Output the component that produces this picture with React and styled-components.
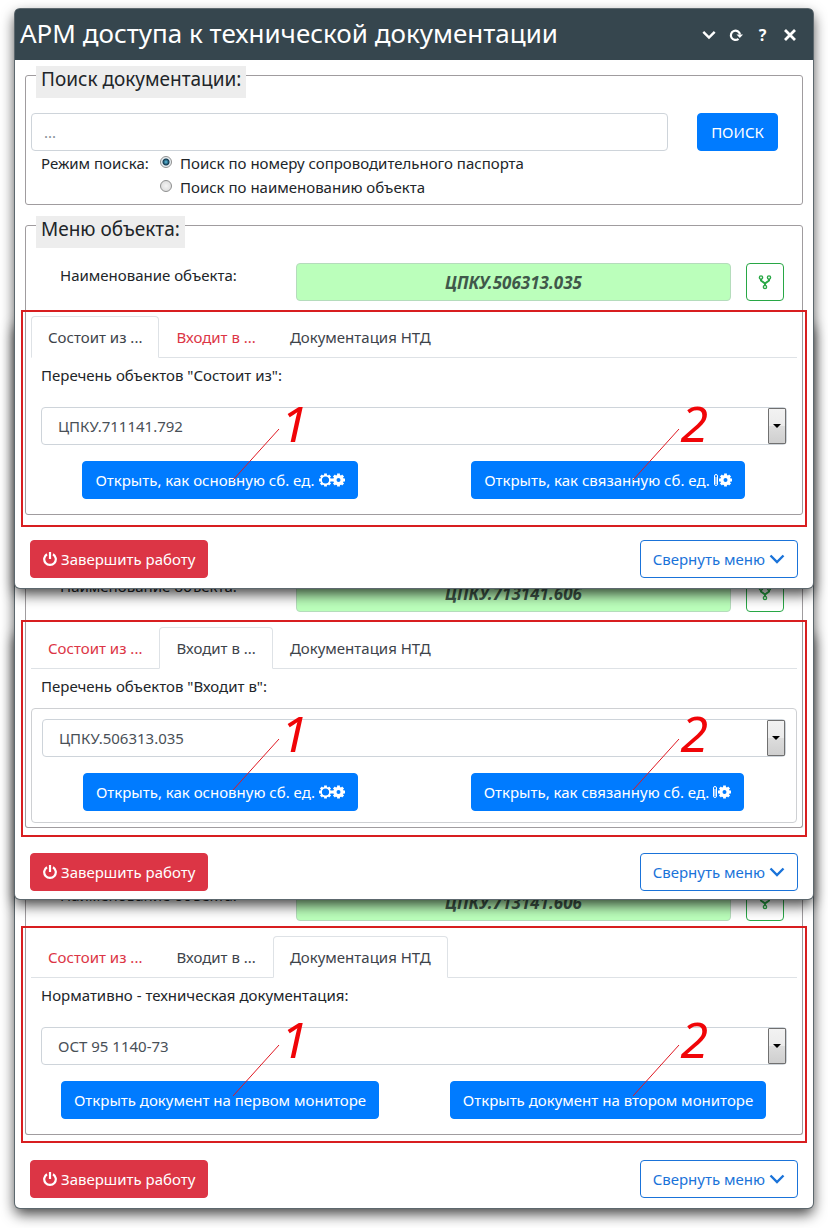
import React, { useState } from "react";
import styled, { createGlobalStyle } from "styled-components";

const GlobalStyle = createGlobalStyle`
  *, *::before, *::after { box-sizing: border-box; }
  body {
    margin: 0;
    background: #fff;
    color: #212529;
    font-family: "Noto Sans", "Open Sans", sans-serif;
    font-size: 15px;
    line-height: 24px;
  }
  button, input, select { font: inherit; color: inherit; margin: 0; }
`;

const Page = styled.main`
  padding: 9px 15px 20px;
`;

const Window = styled.section`
  position: relative;
  z-index: ${(p) => p.$level};
  margin-top: ${(p) => (p.$overlap ? -p.$overlap : 0)}px;
  padding-top: ${(p) => p.$inset || 0}px;
  background: #fff;
  border-radius: 5px;
  box-shadow: 0 0 0 1px #5d686e, 0 6px 14px rgba(0, 0, 0, 0.75);
`;

const TitleBar = styled.header`
  display: flex;
  align-items: center;
  justify-content: space-between;
  height: 51px;
  padding: 0 16px 0 5px;
  color: #fff;
  background: #36464e;
  border-radius: 4px 4px 0 0;
`;

const Title = styled.h1`
  margin: 0;
  padding-bottom: 4px;
  font-size: 26px;
  font-weight: 400;
  line-height: 36px;
`;

const TitleTools = styled.div`
  display: flex;
  gap: 12px;
`;

const ToolButton = styled.button`
  display: grid;
  place-items: center;
  width: 15px;
  height: 20px;
  padding: 0;
  color: #fff;
  font-size: 16px;
  font-weight: 700;
  line-height: 20px;
  background: none;
  border: 0;
`;

const Body = styled.div`
  padding: ${(p) => (p.$cut ? 0 : 6)}px 10px 0;
`;

const Group = styled.fieldset`
  min-width: 0;
  margin: 0 0 11px;
  padding: 0 5px ${(p) => p.$bottom || 0}px;
  border: 1px solid #a09c9f;
  border-radius: 3px;
  ${(p) => p.$cut && "border-top: 0; border-radius: 0 0 3px 3px;"}
`;

const Legend = styled.legend`
  height: 18px;
  margin-left: 5px;
  padding: 0;
  font-size: 19px;

  span {
    display: block;
    height: 32px;
    padding: 0 5px;
    line-height: 26px;
    background: #ededed;
  }
`;

const SearchRow = styled.div`
  display: flex;
  gap: 29px;
  margin-top: 29px;
  padding-right: 19px;
`;

const SearchInput = styled.input`
  flex: 1;
  min-width: 0;
  height: 38px;
  padding: 6px 12px;
  border: 1px solid #ced4da;
  border-radius: 4px;
  &::placeholder { color: #868e96; }
`;

const Button = styled.button`
  display: inline-flex;
  align-items: center;
  justify-content: center;
  gap: 4px;
  height: 38px;
  padding: 0 12px;
  white-space: nowrap;
  color: ${(p) => (p.$outline ? p.$tone : "#fff")};
  background: ${(p) => (p.$outline ? "#fff" : p.$tone)};
  border: 1px solid ${(p) => p.$tone};
  border-radius: 4px;
`;

const SearchButton = styled(Button)`
  min-width: 81px;
`;

const ModeRow = styled.div`
  display: flex;
  padding: 0 10px;
`;

const ModeName = styled.span`
  width: 119px;
`;

const ModeLabel = styled.label`
  display: flex;
  gap: 8px;
`;

const Radio = styled.input`
  appearance: none;
  width: 12px;
  height: 12px;
  margin-top: 5px;
  background: radial-gradient(#f4f4f4, #d6d6d6);
  border: 1px solid #8e8f8f;
  border-radius: 50%;
  &:checked {
    background: radial-gradient(#5fc3e6 0, #11394f 3px, #e8eef2 4px);
  }
`;

const NameRow = styled.div`
  display: flex;
  gap: 15px;
  margin-top: ${(p) => (p.$cut ? 0 : 29)}px;
  padding-right: 13px;
`;

const NameLabel = styled.label`
  width: 250px;
  padding-left: 29px;
`;

const NameInput = styled.input`
  flex: 1;
  min-width: 0;
  height: 38px;
  text-align: center;
  color: #40584a;
  font-size: 17px;
  font-weight: 700;
  font-style: italic;
  background: #bbffbb;
  border: 1px solid #b5dcbc;
  border-radius: 4px;
`;

const TreeButton = styled(Button)`
  width: 38px;
  padding: 0;
`;

const Marked = styled.div`
  position: relative;
  margin-top: 15px;
`;

const Tabs = styled.div`
  display: flex;
  border-bottom: 1px solid #dee2e6;
`;

const Tab = styled.button`
  height: 42px;
  margin-bottom: -1px;
  padding: 0 16px;
  color: ${(p) => (p.$empty ? "#dc3545" : "#3d434a")};
  background: ${(p) => (p.$active ? "#fff" : "none")};
  border: 1px solid ${(p) => (p.$active ? "#dee2e6" : "transparent")};
  border-bottom-color: ${(p) => (p.$active ? "#fff" : "transparent")};
  border-radius: 4px 4px 0 0;
`;

const ListLabel = styled.label`
  display: block;
  padding: 5px 10px 0;
`;

const Card = styled.div`
  margin-top: ${(p) => (p.$framed ? 10 : 20)}px;
  padding: ${(p) => (p.$framed ? "10px 10px 11px" : "0 10px")};
  border: ${(p) => (p.$framed ? "1px solid #ced0d3" : "0")};
  border-radius: 4px;
`;

const SelectBox = styled.div`
  display: flex;
  height: 38px;
  padding-left: 16px;
  border: 1px solid #ced4da;
  border-radius: 4px;
`;

const Select = styled.select`
  flex: 1;
  color: #495057;
  background: none;
  border: 0;
  appearance: none;
`;

const SelectArrow = styled.span`
  display: grid;
  place-items: center;
  width: 18px;
  background: linear-gradient(#f2f2f2, #ebebeb 50%, #dddddd 50%, #cfcfcf);
  border: 1px solid #707070;
  border-radius: 1px;
  pointer-events: none;
`;

const OpenRow = styled.div`
  display: grid;
  grid-template-columns: 1fr 1fr;
  justify-items: center;
  margin: 16px -15px 0;
`;

const Footer = styled.footer`
  display: flex;
  justify-content: space-between;
  padding: 14px 15px ${(p) => p.$bottom}px;
`;

const Frame = styled.div`
  position: absolute;
  top: ${(p) => -p.$rise}px;
  left: -10px;
  right: -10px;
  height: 217px;
  border: 2px solid #d81e20;
  pointer-events: none;
`;

const Callout = styled.div`
  position: absolute;
  top: 81px;
  left: ${(p) => p.$left};
  width: 80px;
  height: 90px;
  color: #f00508;
`;

const CalloutLine = styled.svg`
  position: absolute;
  top: 35px;
  left: 0;
`;

const CalloutNumber = styled.span`
  position: absolute;
  top: 0;
  left: 49px;
  font-size: 50px;
  font-style: italic;
  line-height: 60px;
`;

const ChevronIcon = ({ size = 16, width = 2.4 }) => (
  <svg width={size} height={size} viewBox="0 0 16 16" fill="none" stroke="currentColor" strokeWidth={width}>
    <path d="M1.500 4.500 8 11 14.500 4.500" />
  </svg>
);

const RefreshIcon = () => (
  <svg width="14" height="14" viewBox="0 0 14 14" fill="none" stroke="currentColor" strokeWidth="2.2">
    <path d="M9.5 10.8A4.6 4.6 0 1 1 11 6.500" />
    <path d="M7.500 6.500H14L10.800 10z" fill="currentColor" stroke="none" />
  </svg>
);

const CloseIcon = () => (
  <svg width="14" height="14" viewBox="0 0 14 14" stroke="currentColor" strokeWidth="2.8">
    <path d="M2 2 12 12M12 2 2 12" />
  </svg>
);

const PowerIcon = () => (
  <svg width="14" height="16" viewBox="0 0 14 16" fill="none" stroke="currentColor" strokeWidth="2.2">
    <path d="M4 3.200A5.800 5.800 0 1 0 10 3.200" />
    <path d="M7 1V8" />
  </svg>
);

const ForkIcon = () => (
  <svg width="14" height="16" viewBox="0 0 14 16" fill="none" stroke="currentColor" strokeWidth="1.4">
    <circle cx="3" cy="3.500" r="1.600" />
    <circle cx="11" cy="3.500" r="1.600" />
    <circle cx="7" cy="13" r="1.600" />
    <path d="M3 5V6.500L7 9.500 11 6.500V5M7 9.500V11.500" strokeWidth="2" />
  </svg>
);

const TEETH = [0, 45, 90, 135];

const Gear = ({ x, hole }) => (
  <g transform={`translate(${x} 7)`}>
    {TEETH.map((a) => (
      <path key={a} d="M0-6.500V-4M0 4V6.500" strokeWidth="2.800" transform={`rotate(${a})`} />
    ))}
    <circle r={(hole + 5.2) / 2} fill="none" strokeWidth={5.2 - hole} />
  </g>
);

const GearsIcon = () => (
  <svg width="26" height="14" viewBox="0 0 26 14" stroke="currentColor">
    <Gear x={6.5} hole={3.6} />
    <Gear x={19.5} hole={2} />
  </svg>
);

const LinkedGearIcon = () => (
  <svg width="18" height="14" viewBox="0 0 18 14" stroke="currentColor">
    <rect x="0.500" y="1.500" width="3" height="11" rx="1.500" fill="none" />
    <path d="M2 4V11" />
    <Gear x={11.5} hole={2} />
  </svg>
);

const ArrowIcon = () => (
  <svg width="8" height="4" viewBox="0 0 8 4" fill="#000">
    <path d="M0 0H8L4 4z" />
  </svg>
);

const TAB_NAMES = ["Состоит из ...", "Входит в ...", "Документация НТД"];

function CalloutMark({ left, children }) {
  return (
    <Callout $left={left}>
      <CalloutLine width="50" height="54" viewBox="0 0 50 54">
        <path d="M1 52 47 1" stroke="#e01822" strokeWidth="1" />
      </CalloutLine>
      <CalloutNumber>{children}</CalloutNumber>
    </Callout>
  );
}

function ObjectMenu({ id, name, active, empty, caption, value, framed, rise, actions, cut }) {
  const [current, setCurrent] = useState(active);
  return (
    <>
      <NameRow $cut={cut}>
        <NameLabel htmlFor={`${id}-name`}>Наименование объекта:</NameLabel>
        <NameInput id={`${id}-name`} value={name} readOnly />
        <TreeButton type="button" $outline $tone="#28a745" aria-label="Дерево">
          <ForkIcon />
        </TreeButton>
      </NameRow>
      <Marked>
        <Tabs role="tablist">
          {TAB_NAMES.map((tab, i) => (
            <Tab
              key={tab}
              type="button"
              role="tab"
              aria-selected={i === current}
              $active={i === current}
              $empty={i === empty}
              onClick={() => setCurrent(i)}
            >
              {tab}
            </Tab>
          ))}
        </Tabs>
        <ListLabel htmlFor={`${id}-list`}>{caption}</ListLabel>
        <Card $framed={framed}>
          <SelectBox>
            <Select id={`${id}-list`} defaultValue={value}>
              <option>{value}</option>
            </Select>
            <SelectArrow><ArrowIcon /></SelectArrow>
          </SelectBox>
          <OpenRow>
            {actions.map(({ text, Icon }) => (
              <Button key={text} type="button" $tone="#007bff">
                {text}
                {Icon && <Icon />}
              </Button>
            ))}
          </OpenRow>
        </Card>
        <Frame $rise={rise}>
          <CalloutMark left="calc(25% + 13px)">1</CalloutMark>
          <CalloutMark left="calc(75% + 22px)">2</CalloutMark>
        </Frame>
      </Marked>
    </>
  );
}

function WindowFooter({ bottom = 10 }) {
  return (
    <Footer $bottom={bottom}>
      <Button type="button" $tone="#dc3545">
        <PowerIcon />
        Завершить работу
      </Button>
      <Button type="button" $outline $tone="#1a73d9">
        Свернуть меню
        <ChevronIcon />
      </Button>
    </Footer>
  );
}

const ASSEMBLY_ACTIONS = [
  { text: "Открыть, как основную сб. ед.", Icon: GearsIcon },
  { text: "Открыть, как связанную сб. ед.", Icon: LinkedGearIcon },
];

const DOCUMENT_ACTIONS = [
  { text: "Открыть документ на первом мониторе" },
  { text: "Открыть документ на втором мониторе" },
];

export default function App() {
  return (
    <Page>
      <GlobalStyle />
      <Window $level={3}>
        <TitleBar>
          <Title>АРМ доступа к технической документации</Title>
          <TitleTools>
            <ToolButton type="button" aria-label="Свернуть"><ChevronIcon size={14} width={2.8} /></ToolButton>
            <ToolButton type="button" aria-label="Обновить"><RefreshIcon /></ToolButton>
            <ToolButton type="button">?</ToolButton>
            <ToolButton type="button" aria-label="Закрыть"><CloseIcon /></ToolButton>
          </TitleTools>
        </TitleBar>
        <Body>
          <Group $bottom={5}>
            <Legend><span>Поиск документации:</span></Legend>
            <SearchRow>
              <SearchInput placeholder="..." aria-label="Поиск документации" />
              <SearchButton type="button" $tone="#007bff">ПОИСК</SearchButton>
            </SearchRow>
            <ModeRow>
              <ModeName>Режим поиска:</ModeName>
              <div>
                <ModeLabel>
                  <Radio type="radio" name="mode" defaultChecked />
                  Поиск по номеру сопроводительного паспорта
                </ModeLabel>
                <ModeLabel>
                  <Radio type="radio" name="mode" />
                  Поиск по наименованию объекта
                </ModeLabel>
              </div>
            </ModeRow>
          </Group>
          <Group $bottom={15}>
            <Legend><span>Меню объекта:</span></Legend>
            <ObjectMenu
              id="parts"
              name="ЦПКУ.506313.035"
              active={0}
              empty={1}
              caption={'Перечень объектов "Состоит из":'}
              value="ЦПКУ.711141.792"
              rise={6}
              actions={ASSEMBLY_ACTIONS}
            />
          </Group>
        </Body>
        <WindowFooter />
      </Window>

      <Window $level={2} $overlap={268} $inset={254}>
        <Body $cut>
          <Group $cut $bottom={4}>
            <ObjectMenu
              id="parents"
              name="ЦПКУ.713141.606"
              active={1}
              empty={0}
              caption={'Перечень объектов "Входит в":'}
              value="ЦПКУ.506313.035"
              framed
              rise={7}
              actions={ASSEMBLY_ACTIONS}
              cut
            />
          </Group>
        </Body>
        <WindowFooter bottom={8} />
      </Window>

      <Window $level={1} $overlap={270} $inset={254}>
        <Body $cut>
          <Group $cut $bottom={15}>
            <ObjectMenu
              id="docs"
              name="ЦПКУ.713141.606"
              active={2}
              empty={0}
              caption="Нормативно - техническая документация:"
              value="ОСТ 95 1140-73"
              rise={10}
              actions={DOCUMENT_ACTIONS}
              cut
            />
          </Group>
        </Body>
        <WindowFooter />
      </Window>
    </Page>
  );
}
